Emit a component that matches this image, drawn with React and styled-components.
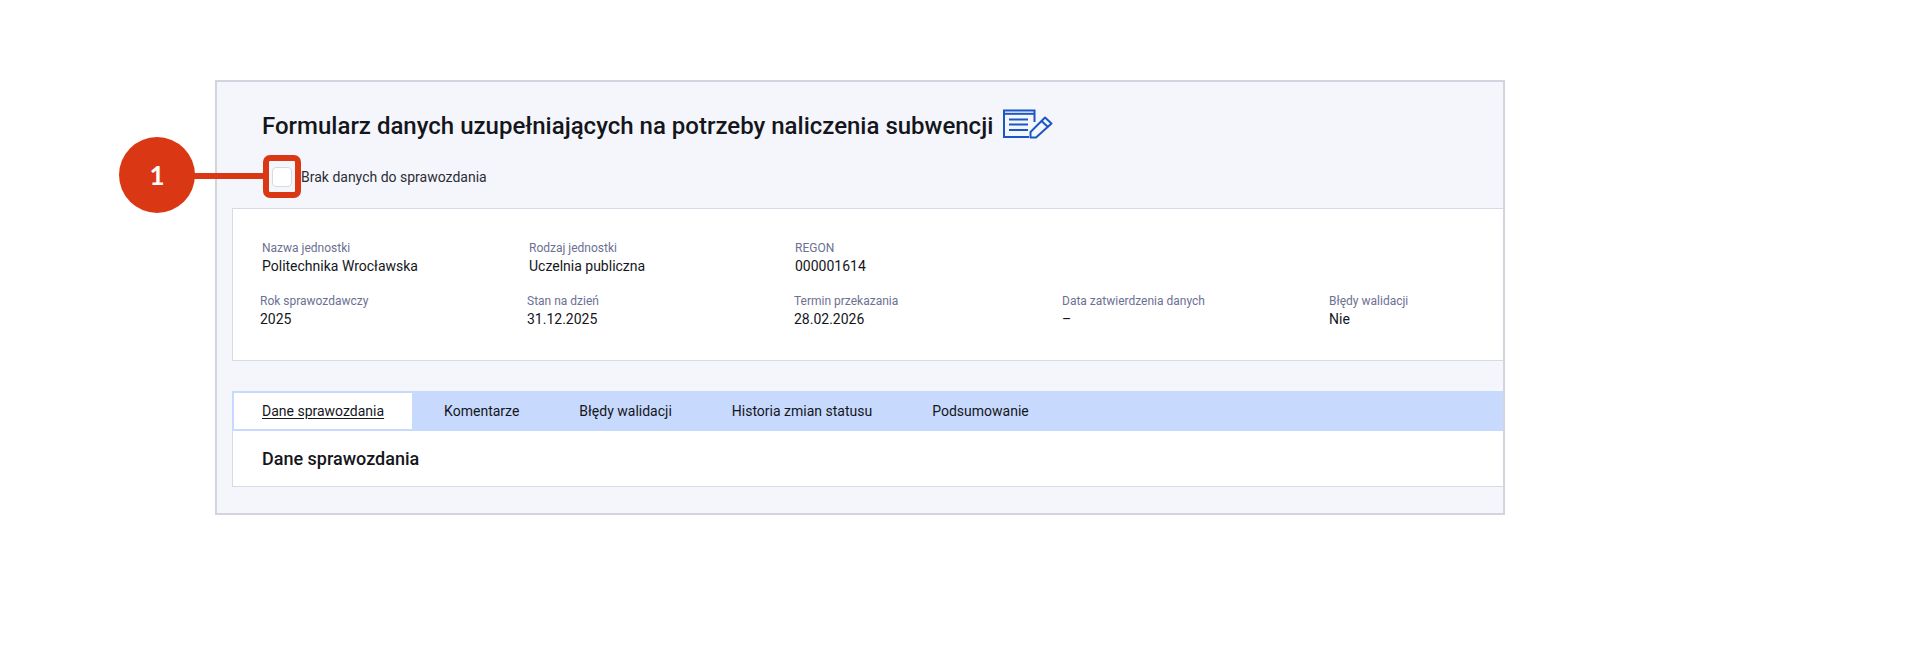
import React from "react";
import styled, { createGlobalStyle } from "styled-components";

const Global = createGlobalStyle`
  html, body { margin: 0; padding: 0; background: #fff; }
  body { font-family: Roboto, "Liberation Sans", sans-serif; color: #14161c; }
`;

const Page = styled.div`
  position: relative;
  width: 1919px;
  height: 658px;
  padding: 80px 0 0 215px;
  box-sizing: border-box;
  overflow: hidden;
`;

const Panel = styled.section`
  width: 1290px;
  height: 435px;
  box-sizing: border-box;
  background: #f5f6fb;
  border: 2px solid #d2d5df;
  padding: 26px 0 0 15px;
  display: flex;
  flex-direction: column;
`;

const TitleRow = styled.div`
  display: flex;
  align-items: center;
  gap: 10px;
  padding-left: 30px;
  height: 36px;
`;

const Title = styled.h1`
  margin: 0;
  font-size: 24px;
  font-weight: 500;
  line-height: 36px;
  color: #14161c;
`;

const CheckRow = styled.label`
  display: flex;
  align-items: center;
  gap: 9px;
  padding-left: 40px;
  margin-top: 21px;
  height: 24px;
  font-size: 14px;
  color: #2a2d36;
`;

const CheckBox = styled.span`
  display: block;
  width: 20px;
  height: 20px;
  box-sizing: border-box;
  background: #fff;
  border: 1px solid #d8dae3;
  border-radius: 4px;
`;

const InfoCard = styled.div`
  margin-top: 19px;
  height: 153px;
  box-sizing: border-box;
  background: #fff;
  border: 1px solid #d8dae3;
  border-right: none;
  padding: 31px 0 0 27px;
`;

const InfoRow = styled.div`
  display: grid;
  grid-template-columns: ${(p) => p.$cols};
  margin-left: ${(p) => p.$offset || 0}px;
  margin-bottom: 17px;
`;

const Field = styled.div`
  display: flex;
  flex-direction: column;
`;

const Label = styled.span`
  font-size: 12px;
  line-height: 16px;
  color: #6c7193;
`;

const Value = styled.span`
  font-size: 14px;
  line-height: 20px;
  color: #14161c;
`;

const TabBar = styled.nav`
  margin-top: 30px;
  height: 40px;
  display: flex;
  background: #c7d9fd;
`;

const Tab = styled.div`
  height: 100%;
  box-sizing: border-box;
  display: flex;
  align-items: center;
  padding: 0 ${(p) => (p.$active ? "28px" : "30px")};
  font-size: 14px;
  color: #14161c;
  ${(p) =>
    p.$active &&
    `background:#fff;border:2px solid #c7d9fd;border-right:none;margin-right:2px;text-decoration:underline;text-underline-offset:2px;`}
`;

const TabBody = styled.div`
  height: 56px;
  box-sizing: border-box;
  background: #fff;
  border: 1px solid #d8dae3;
  border-top: none;
  border-right: none;
  padding-left: 29px;
  display: flex;
  align-items: center;
`;

const SectionTitle = styled.h2`
  margin: 0;
  font-size: 18px;
  font-weight: 500;
  color: #14161c;
`;

const CalloutCircle = styled.div`
  position: absolute;
  left: 119px;
  top: 137px;
  width: 76px;
  height: 76px;
  border-radius: 50%;
  background: #da3815;
  color: #fff;
  font-family: Lato, sans-serif;
  font-weight: 700;
  font-size: 26px;
  display: flex;
  align-items: center;
  justify-content: center;
`;

const CalloutLine = styled.div`
  position: absolute;
  left: 190px;
  top: 173px;
  width: 75px;
  height: 6px;
  background: #da3815;
`;

const CalloutFrame = styled.div`
  position: absolute;
  left: 263px;
  top: 155px;
  width: 38px;
  height: 43px;
  box-sizing: border-box;
  border: 6px solid #da3815;
  border-radius: 7px;
`;

const IconSvg = styled.svg`
  flex: none;
  margin-bottom: 4px;
`;

const FormIcon = () => (
  <IconSvg width="50" height="30" viewBox="0 0 50 30" fill="none" stroke="#1a56c4" strokeWidth="2">
    <path d="M26 28H1V1.5H31.5V13" />
    <path d="M1 4.8H31.5" />
    <path d="M6 10.5H25M6 15.5H25M6 21H25" />
    <path d="M27.5 28.5V23L42 8.5L48.5 14.5L33 28.5Z" strokeLinejoin="round" />
    <path d="M38.5 12L45 18" />
  </IconSvg>
);

const top = [
  ["Nazwa jednostki", "Politechnika Wrocławska"],
  ["Rodzaj jednostki", "Uczelnia publiczna"],
  ["REGON", "000001614"],
];
const bottom = [
  ["Rok sprawozdawczy", "2025"],
  ["Stan na dzień", "31.12.2025"],
  ["Termin przekazania", "28.02.2026"],
  ["Data zatwierdzenia danych", "–"],
  ["Błędy walidacji", "Nie"],
];
const tabs = ["Dane sprawozdania", "Komentarze", "Błędy walidacji", "Historia zmian statusu", "Podsumowanie"];

export default function App() {
  return (
    <Page>
      <Global />
      <Panel>
        <TitleRow>
          <Title>Formularz danych uzupełniających na potrzeby naliczenia subwencji</Title>
          <FormIcon />
        </TitleRow>
        <CheckRow>
          <CheckBox />
          Brak danych do sprawozdania
        </CheckRow>
        <InfoCard>
          <InfoRow $offset={2} $cols="267px 266px 267px">
            {top.map(([l, v]) => (
              <Field key={l}>
                <Label>{l}</Label>
                <Value>{v}</Value>
              </Field>
            ))}
          </InfoRow>
          <InfoRow $cols="267px 267px 268px 267px 267px">
            {bottom.map(([l, v]) => (
              <Field key={l}>
                <Label>{l}</Label>
                <Value>{v}</Value>
              </Field>
            ))}
          </InfoRow>
        </InfoCard>
        <TabBar>
          {tabs.map((t, i) => (
            <Tab key={t} $active={i === 0}>
              {t}
            </Tab>
          ))}
        </TabBar>
        <TabBody>
          <SectionTitle>Dane sprawozdania</SectionTitle>
        </TabBody>
      </Panel>
      <CalloutLine />
      <CalloutFrame />
      <CalloutCircle>1</CalloutCircle>
    </Page>
  );
}
